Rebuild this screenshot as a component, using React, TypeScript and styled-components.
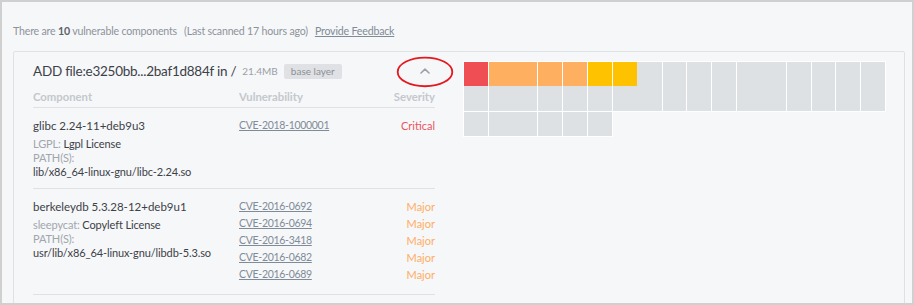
import React from "react";
import styled, { createGlobalStyle } from "styled-components";

const Global = createGlobalStyle`
  html, body { margin: 0; padding: 0; }
  body { font-family: Lato, "Open Sans", sans-serif; background: #f6f7f9; }
  * { box-sizing: border-box; }
`;

const Frame = styled.div`
  width: 914px;
  height: 305px;
  border: 2px solid #d0d0d0;
  background: #f6f7f9;
  overflow: hidden;
  padding: 22px 7px 0 11px;
`;

const Summary = styled.div`
  font-size: 10.6px;
  letter-spacing: -0.18px;
  line-height: 14px;
  color: #8d9399;
  white-space: nowrap;
  strong { color: #5c6268; font-weight: 700; }
`;

const Aside = styled.span`
  margin-left: 7px;
`;

const FeedbackLink = styled.a`
  margin-left: 7px;
  color: #7f8b97;
  text-decoration: underline;
  cursor: pointer;
`;

const Card = styled.section`
  margin-top: 13px;
  border: 1px solid #dfe1e4;
  border-radius: 2px;
  display: flex;
  gap: 29px;
  padding: 10px 19px 12px 19px;
`;

const LeftColumn = styled.div`
  flex: 0 0 402px;
  display: flex;
  flex-direction: column;
`;

const TitleRow = styled.div`
  display: flex;
  align-items: center;
  height: 18px;
`;

const Title = styled.span`
  font-size: 13.5px;
  letter-spacing: -0.25px;
  color: #3c4147;
  white-space: nowrap;
`;

const SizeLabel = styled.span`
  margin-left: 6px;
  font-size: 10px;
  color: #9aa0a6;
`;

const Badge = styled.span`
  margin-left: 6px;
  height: 15px;
  line-height: 15px;
  padding: 0 7px;
  font-size: 10px;
  color: #8a9097;
  background: #dfe1e4;
  border-radius: 2px;
`;

const Toggle = styled.button`
  margin-left: auto;
  position: relative;
  width: 20px;
  height: 18px;
  padding: 0;
  border: none;
  background: transparent;
  display: flex;
  align-items: center;
  justify-content: center;
  cursor: pointer;
`;

const Annotation = styled.svg`
  position: absolute;
  left: 50%;
  top: 50%;
  width: 57px;
  height: 31px;
  transform: translate(-50%, -47%);
  pointer-events: none;
  overflow: visible;
`;

const HeaderRow = styled.div`
  margin-top: 10px;
  display: grid;
  grid-template-columns: 206px 1fr auto;
  font-size: 11.3px;
  font-weight: 700;
  line-height: 14px;
  color: #c4c8cc;
  padding-bottom: 3px;
  border-bottom: 1px solid #dfe1e4;
`;

const Row = styled.div`
  display: grid;
  grid-template-columns: 206px 1fr;
  padding: 11px 0 9px;
  border-bottom: 1px solid #dfe1e4;
`;

const ComponentName = styled.div`
  font-size: 11.5px;
  line-height: 14px;
  color: #3c4147;
  margin-bottom: 4px;
`;

const MetaLine = styled.div`
  font-size: 11px;
  letter-spacing: -0.12px;
  line-height: 14px;
  color: #3c4147;
  white-space: nowrap;
`;

const MetaLabel = styled.span`
  color: #a0a6ac;
`;

const VulnList = styled.div`
  margin-top: -2px;
  padding-bottom: 2px;
  display: flex;
  flex-direction: column;
`;

const VulnLine = styled.div`
  display: flex;
  justify-content: space-between;
  font-size: 11px;
  line-height: 17px;
`;

const CveLink = styled.a`
  font-size: 10.5px;
  color: #7f8b97;
  letter-spacing: -0.3px;
  text-decoration: underline;
  cursor: pointer;
`;

const severityColor: Record<string, string> = {
  Critical: "#ea5560",
  Major: "#ffad62",
};

const Severity = styled.span<{ $level: string }>`
  color: ${(p) => severityColor[p.$level] || "#9aa0a6"};
`;

const LayerMap = styled.div`
  flex: 0 0 421px;
  align-self: flex-start;
  display: grid;
  grid-template-columns: repeat(17, 1fr);
  grid-template-rows: repeat(3, 24px);
  gap: 1px;
`;

const tones: Record<string, string> = {
  none: "#dee1e4",
  critical: "#ef4e55",
  major: "#ffaf60",
  minor: "#ffc200",
};

const Cell = styled.div<{ $col: number; $span: number; $row: number; $rows: number; $tone: string; $ring?: boolean }>`
  grid-column: ${(p) => p.$col} / span ${(p) => p.$span};
  grid-row: ${(p) => p.$row} / span ${(p) => p.$rows};
  background: ${(p) => tones[p.$tone]};
  box-shadow: ${(p) => (p.$ring ? "0 0 0 1px #ffffff" : "none")};
`;

type CellDef = { col: number; span: number; row: number; rows: number; tone: string; ring?: boolean };

const cells: CellDef[] = [
  // two-row base blocks
  { col: 1, span: 1, row: 1, rows: 2, tone: "none", ring: true },
  { col: 2, span: 2, row: 1, rows: 2, tone: "none", ring: true },
  { col: 4, span: 1, row: 1, rows: 2, tone: "none", ring: true },
  { col: 5, span: 1, row: 1, rows: 2, tone: "none", ring: true },
  { col: 6, span: 1, row: 1, rows: 2, tone: "none", ring: true },
  { col: 7, span: 2, row: 1, rows: 2, tone: "none", ring: true },
  { col: 9, span: 1, row: 1, rows: 2, tone: "none", ring: true },
  { col: 10, span: 1, row: 1, rows: 2, tone: "none", ring: true },
  { col: 11, span: 1, row: 1, rows: 2, tone: "none", ring: true },
  { col: 12, span: 2, row: 1, rows: 2, tone: "none", ring: true },
  { col: 14, span: 1, row: 1, rows: 2, tone: "none", ring: true },
  { col: 15, span: 1, row: 1, rows: 2, tone: "none", ring: true },
  { col: 16, span: 1, row: 1, rows: 2, tone: "none", ring: true },
  { col: 17, span: 1, row: 1, rows: 2, tone: "none", ring: true },
  // third row
  { col: 1, span: 1, row: 3, rows: 1, tone: "none", ring: true },
  { col: 2, span: 2, row: 3, rows: 1, tone: "none", ring: true },
  { col: 4, span: 1, row: 3, rows: 1, tone: "none", ring: true },
  { col: 5, span: 1, row: 3, rows: 1, tone: "none", ring: true },
  { col: 6, span: 1, row: 3, rows: 1, tone: "none", ring: true },
  // vulnerable portions
  { col: 1, span: 1, row: 1, rows: 1, tone: "critical" },
  { col: 2, span: 2, row: 1, rows: 1, tone: "major" },
  { col: 4, span: 1, row: 1, rows: 1, tone: "major" },
  { col: 5, span: 1, row: 1, rows: 1, tone: "major" },
  { col: 6, span: 1, row: 1, rows: 1, tone: "minor" },
  { col: 7, span: 1, row: 1, rows: 1, tone: "minor" },
];

type Vuln = { id: string; severity: string };
type Comp = { name: string; licenseKey: string; license: string; path: string; vulns: Vuln[] };

const components: Comp[] = [
  {
    name: "glibc 2.24-11+deb9u3",
    licenseKey: "LGPL:",
    license: "Lgpl License",
    path: "lib/x86_64-linux-gnu/libc-2.24.so",
    vulns: [{ id: "CVE-2018-1000001", severity: "Critical" }],
  },
  {
    name: "berkeleydb 5.3.28-12+deb9u1",
    licenseKey: "sleepycat:",
    license: "Copyleft License",
    path: "usr/lib/x86_64-linux-gnu/libdb-5.3.so",
    vulns: [
      { id: "CVE-2016-0692", severity: "Major" },
      { id: "CVE-2016-0694", severity: "Major" },
      { id: "CVE-2016-3418", severity: "Major" },
      { id: "CVE-2016-0682", severity: "Major" },
      { id: "CVE-2016-0689", severity: "Major" },
    ],
  },
];

export default function App() {
  return (
    <>
      <Global />
      <Frame>
        <Summary>
          There are <strong>10</strong> vulnerable components
          <Aside>(Last scanned 17 hours ago)</Aside>
          <FeedbackLink>Provide Feedback</FeedbackLink>
        </Summary>
        <Card>
          <LeftColumn>
            <TitleRow>
              <Title>ADD file:e3250bb...2baf1d884f in /</Title>
              <SizeLabel>21.4MB</SizeLabel>
              <Badge>base layer</Badge>
              <Toggle aria-label="Collapse layer">
                <svg width="10" height="6" viewBox="0 0 10 6">
                  <path d="M1 5 L5 1.2 L9 5" fill="none" stroke="#9ba1a8" strokeWidth="1.6" strokeLinecap="round" strokeLinejoin="round" />
                </svg>
                <Annotation viewBox="0 0 57 31">
                  <ellipse cx="28.5" cy="15.5" rx="27.3" ry="14.3" fill="none" stroke="#e3191e" strokeWidth="1.8" />
                </Annotation>
              </Toggle>
            </TitleRow>
            <HeaderRow>
              <span>Component</span>
              <span>Vulnerability</span>
              <span>Severity</span>
            </HeaderRow>
            {components.map((c) => (
              <Row key={c.name}>
                <div>
                  <ComponentName>{c.name}</ComponentName>
                  <MetaLine>
                    <MetaLabel>{c.licenseKey}</MetaLabel> {c.license}
                  </MetaLine>
                  <MetaLine>
                    <MetaLabel>PATH(S):</MetaLabel>
                  </MetaLine>
                  <MetaLine>{c.path}</MetaLine>
                </div>
                <VulnList>
                  {c.vulns.map((v) => (
                    <VulnLine key={v.id}>
                      <CveLink>{v.id}</CveLink>
                      <Severity $level={v.severity}>{v.severity}</Severity>
                    </VulnLine>
                  ))}
                </VulnList>
              </Row>
            ))}
          </LeftColumn>
          <LayerMap>
            {cells.map((c, i) => (
              <Cell key={i} $col={c.col} $span={c.span} $row={c.row} $rows={c.rows} $tone={c.tone} $ring={c.ring} />
            ))}
          </LayerMap>
        </Card>
      </Frame>
    </>
  );
}
